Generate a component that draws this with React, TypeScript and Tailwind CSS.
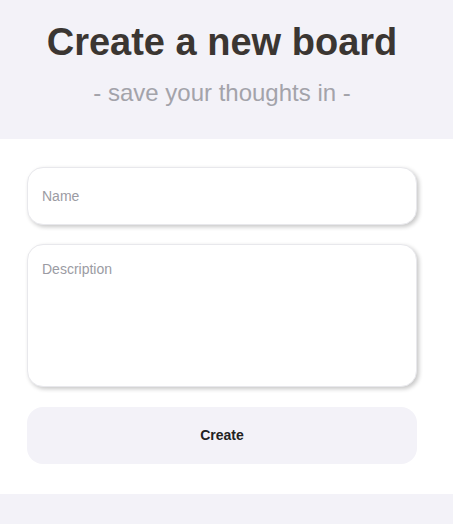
export default function App() {
  return (
    <div className="min-h-[524px] bg-[#f3f2f8] font-['Liberation_Sans',Arial,sans-serif]">
      <div className="w-[444px] pt-[21px] pb-[30px] text-center">
        <h1 className="text-[38px] leading-[42px] font-bold text-[#3b3632]">
          Create a new board
        </h1>
        <p className="mt-[14px] text-[24px] leading-[32px] text-[#a3a3aa]">
          - save your thoughts in -
        </p>
      </div>
      <div className="bg-white pt-[28px] pb-[30px]">
        <form className="w-[390px] ml-[27px] flex flex-col">
          <input
            type="text"
            placeholder="Name"
            className="h-[58px] w-full rounded-[16px] border border-[#e8e8ec] bg-white px-[14px] text-[14px] text-[#333] placeholder:text-[#9b9ba3] shadow-[2px_2px_4px_rgba(0,0,0,0.22)] outline-none"
          />
          <textarea
            placeholder="Description"
            className="mt-[19px] h-[143px] w-full resize-none rounded-[16px] border border-[#e8e8ec] bg-white px-[14px] pt-[14px] text-[14px] text-[#333] placeholder:text-[#9b9ba3] shadow-[2px_2px_4px_rgba(0,0,0,0.22)] outline-none"
          />
          <button
            type="button"
            className="mt-[20px] h-[57px] w-full rounded-[16px] bg-[#f3f2f8] text-[14px] font-bold text-[#222]"
          >
            Create
          </button>
        </form>
      </div>
    </div>
  );
}
